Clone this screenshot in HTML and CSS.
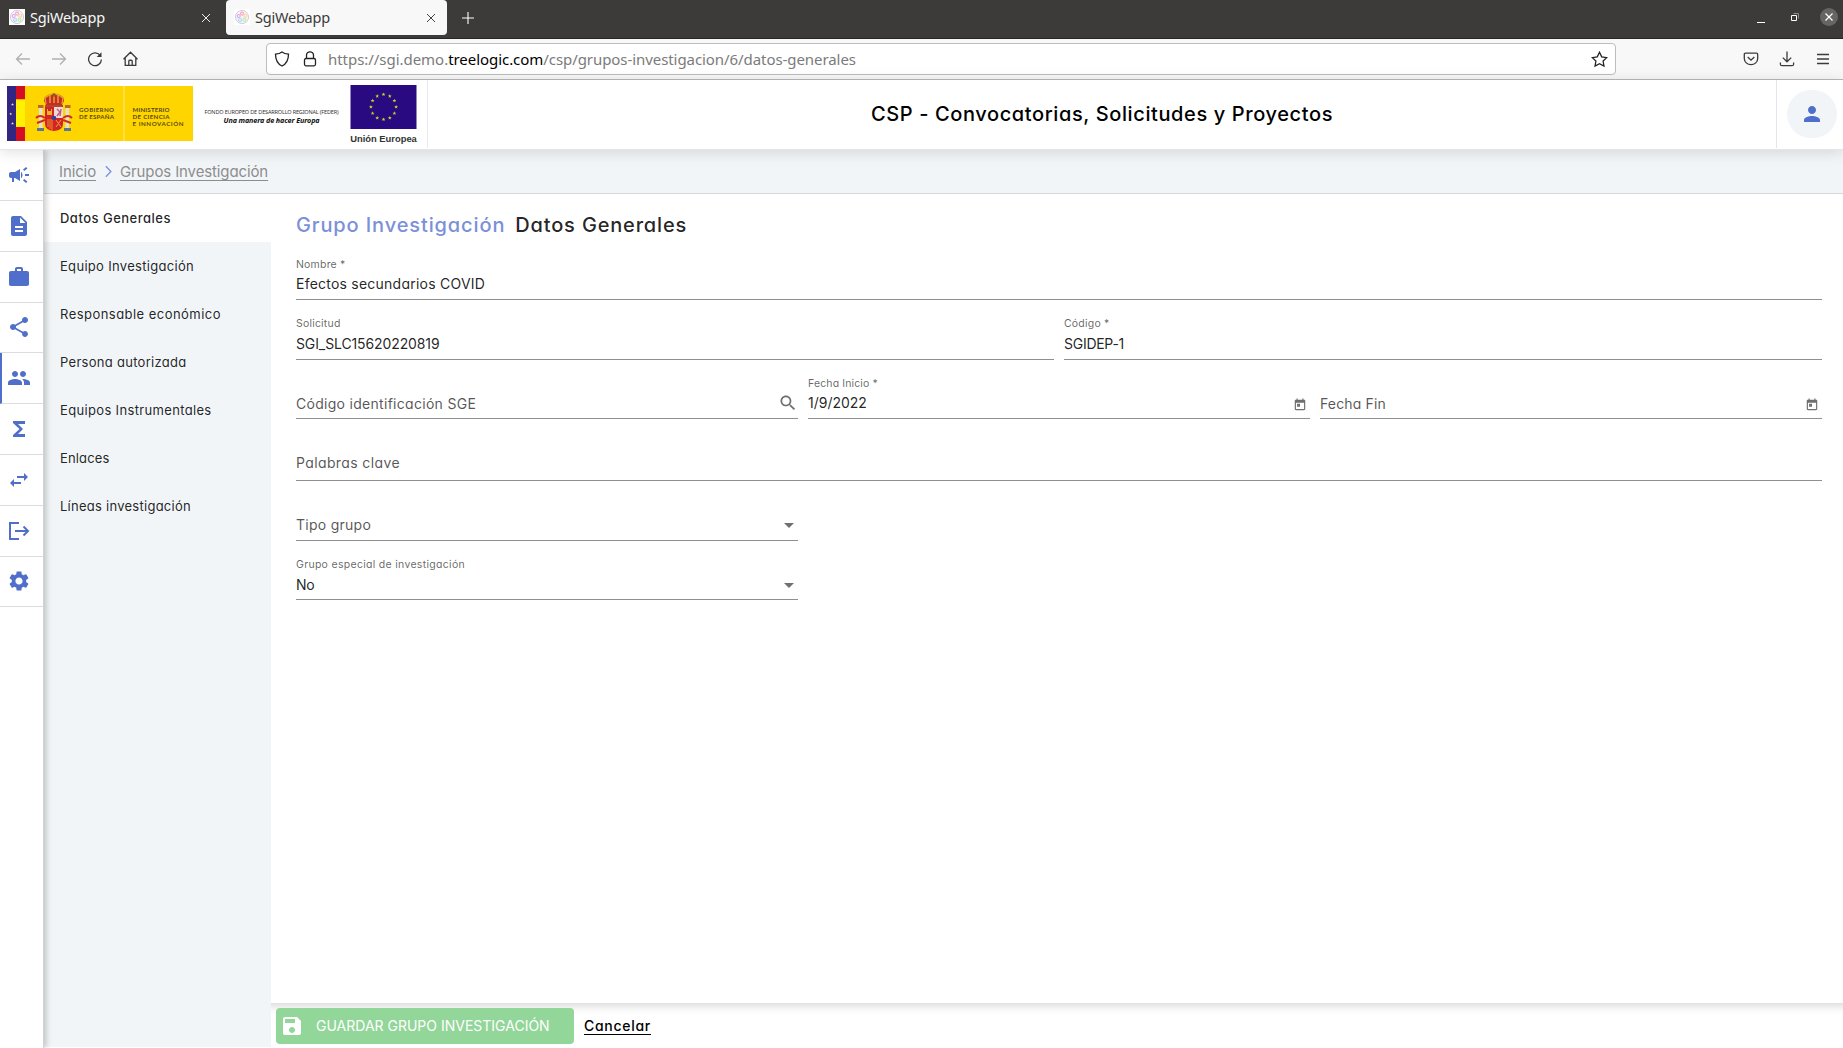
FILE: index.html
```
<!DOCTYPE html>
<html lang="es">
<head>
<meta charset="utf-8">
<title>SgiWebapp</title>
<link rel="stylesheet" href="styles.css">
</head>
<body>
<svg class="defs" width="0" height="0">
  <defs>
    <g id="favicon">
      <rect width="16" height="16" fill="#fff"/>
      <circle cx="8" cy="8" r="6.6" fill="#f8f3f8" stroke="#c8c4ce" stroke-width=".8"/>
      <g fill="none" stroke-width="1.1">
        <circle cx="8" cy="4.6" r="1.5" stroke="#f7a8c4"/><circle cx="11.2" cy="6.8" r="1.5" stroke="#f9d79a"/>
        <circle cx="10.4" cy="10.8" r="1.5" stroke="#b4eeb0"/><circle cx="6" cy="11" r="1.5" stroke="#a9d8f8"/>
        <circle cx="4.7" cy="7" r="1.5" stroke="#d8a8f2"/>
      </g>
    </g>
    <g id="today"><path d="M19 3h-1V1h-2v2H8V1H6v2H5c-1.11 0-1.99.9-1.99 2L3 19c0 1.1.89 2 2 2h14c1.1 0 2-.9 2-2V5c0-1.1-.9-2-2-2zm0 16H5V8h14v11zM7 10h5v5H7z"/></g>
    <path id="star" d="M0-1.5.4-.5 1.4-.5.6.2.9 1.2 0 .6-.9 1.2-.6.2-1.4-.5-.4-.5z"/>
  </defs>
</svg>

<div class="tabbar">
  <div class="tab">
    <svg class="fav" viewBox="0 0 16 16"><use href="#favicon"/></svg>
    <span class="tab-name">SgiWebapp</span>
    <svg class="tab-close" viewBox="0 0 10 10"><path d="M1 1l8 8M9 1L1 9"/></svg>
  </div>
  <div class="tab tab-active">
    <svg class="fav" viewBox="0 0 16 16"><use href="#favicon"/></svg>
    <span class="tab-name">SgiWebapp</span>
    <svg class="tab-close" viewBox="0 0 10 10"><path d="M1 1l8 8M9 1L1 9"/></svg>
  </div>
  <svg class="tab-new" viewBox="0 0 12 12"><path d="M6 0v12M0 6h12"/></svg>
  <div class="win">
    <svg class="win-min" width="10" height="10"><path d="M1 7.5h8" stroke="#fff"/></svg>
    <svg width="10" height="10"><path d="M3.500 1.500h5v5" stroke="#8d8c8a" fill="none"/><path d="M1.500 3.500h5v5h-5z" stroke="#fff" fill="none"/></svg>
    <span class="win-close"><svg width="10" height="10"><path d="M1.500 1.500l7 7M8.500 1.500l-7 7" stroke="#fff" stroke-width="1.300"/></svg></span>
  </div>
</div>

<div class="toolbar">
  <svg class="tb off" viewBox="0 0 16 16"><path d="M15 8H1.500M7 2.500L1.500 8 7 13.500"/></svg>
  <svg class="tb off" viewBox="0 0 16 16"><path d="M1 8h13.500M9 2.500L14.500 8 9 13.500"/></svg>
  <svg class="tb" viewBox="0 0 16 16"><path d="M13.500 5A6.400 6.400 0 1 0 14.400 8.500"/><path d="M14.500 1.200v4.800H9.700z" fill="#3b3b3d" stroke="none"/></svg>
  <svg class="tb" viewBox="0 0 16 16"><path d="M.5 8.200L7.500 1.200l7 7M2.200 7v7.300h10.600V7M5.800 14.300V10c0-1 3.400-1 3.400 0v4.300"/></svg>
  <div class="url">
    <svg class="url-icon" viewBox="0 0 16 16"><path d="M8 1C6 2.600 4 3 1.500 3.200 1.500 9 3 12.500 8 15c5-2.500 6.500-6 6.500-11.800C12 3 10 2.600 8 1z"/></svg>
    <svg class="url-icon" viewBox="0 0 16 16"><rect x="2.500" y="7.500" width="11" height="7.300" rx="1.500"/><path d="M4.500 7.500V4.300a3.500 3.500 0 0 1 7 0v3.200"/></svg>
    <div class="address"><span class="addr-a">https://sgi.demo.</span><span class="addr-b">treelogic.com</span><span class="addr-c">/csp/grupos-investigacion/6/datos-generales</span></div>
    <svg class="url-star" viewBox="0 0 16 16"><path d="M8 1.200l2.100 4.300 4.700.7-3.400 3.300.8 4.700L8 12l-4.200 2.200.8-4.700L1.200 6.200l4.700-.7z"/></svg>
  </div>
  <div class="tools">
    <svg class="tb" viewBox="0 0 16 16"><path d="M2.500 2.200h11q1.200 0 1.200 1.200v4A6.700 6.300 0 0 1 1.300 7.400v-4q0-1.200 1.200-1.200zM4.700 6L8 9.200 11.300 6"/></svg>
    <svg class="tb" viewBox="0 0 16 16"><path d="M8 .5v10.300M3.800 6.600L8 10.800l4.200-4.200M1.400 11.500v1.700q0 1.500 1.500 1.500h10.200q1.500 0 1.500-1.500v-1.700"/></svg>
    <svg class="tb" viewBox="0 0 16 16"><path d="M2 3.500h12M2 8h12M2 12.500h12"/></svg>
  </div>
</div>

<header class="header">
  <div class="logos">
    <svg class="flags" viewBox="0 0 186 55">
      <rect width="187" height="55" fill="#ffd500"/>
      <path d="M0 0h9v55H0z" fill="#312783"/>
      <path d="M9 0h9v13.500H9zM9 41h9v14H9z" fill="#d50f20"/>
      <path d="M9 13.500h9V41H9z" fill="#fff100"/>
      <g fill="#fff36b"><use href="#star" x="5.500" y="18.500"/><use href="#star" x="3.700" y="28"/><use href="#star" x="5.500" y="37.500"/></g>
      <path d="M117 0v55" stroke="#ffe98a"/>
      <g>
        <path d="M37 15c0-5 4-7 10-7s10 2 10 7l-2 4H39z" fill="#c62d26"/>
        <path d="M39 18l-1-6q4-4 9-4t9 4l-1 6" fill="none" stroke="#e0a526" stroke-width="1.300"/>
        <path d="M47 8v9M43 9v8M51 9v8" stroke="#f0bb2a" stroke-width="1.200"/>
        <circle cx="47" cy="9" r="1.700" fill="#8f5b20"/>
        <path d="M38 19h18v2H38z" fill="#b5452a"/>
        <path d="M38 21h18v17q0 6-9 7-9-1-9-7z" fill="#d4222a"/>
        <path d="M47 21h9v11h-9z" fill="#efd9d7"/>
        <path d="M50 23l3 3-3 4M54 23l-1 7" stroke="#bc5a79" fill="none" stroke-width="1.400"/>
        <path d="M40 29v-6h1v2h3v-2h1v6z" fill="#efb32a"/>
        <path d="M41 33v8M43 33v10M45 33v11" stroke="#f1aa26" stroke-width=".8"/>
        <path d="M49 34l5 7M54 34l-5 7" stroke="#e9a426"/>
        <circle cx="47" cy="32" r="2.300" fill="#3e3e91"/>
        <path d="M32 22h3.500v20H32zM58.500 22H62v20h-3.500z" fill="#e3e0d0"/>
        <path d="M31 19h5.500v3H31zM58 19h5.500v3H58z" fill="#bb6a26"/>
        <path d="M29 32q4-4 9 0M30 37l8-3M65 32q-4-4-9 0M64 37l-8-3" stroke="#cf2c27" fill="none" stroke-width="2"/>
        <path d="M30 42h7v3h-7zM57 42h7v3h-7z" fill="#5c7791"/>
      </g>
      <g class="gov">
        <text x="72" y="25.500" textLength="35">GOBIERNO</text><text x="72" y="32.500" textLength="35">DE ESPAÑA</text>
        <text x="125.500" y="25.500" textLength="37">MINISTERIO</text><text x="125.500" y="32.500" textLength="37">DE CIENCIA</text><text x="125.500" y="39.500" textLength="51">E INNOVACIÓN</text>
      </g>
    </svg>
    <div class="feder"><span>FONDO EUROPEO DE DESARROLLO REGIONAL (FEDER)</span><b>Una manera de hacer Europa</b></div>
    <div class="eu">
      <svg viewBox="0 0 66 44">
        <rect width="66" height="44" fill="#2a0a80"/>
        <g fill="#bfe022" transform="translate(33 22)">
          <use href="#star" transform="translate(0 -12.500)scale(1.350)"/><use href="#star" transform="translate(6.300 -10.900)scale(1.350)"/><use href="#star" transform="translate(10.900 -6.300)scale(1.350)"/><use href="#star" transform="translate(12.600 0)scale(1.350)"/><use href="#star" transform="translate(10.900 6.300)scale(1.350)"/><use href="#star" transform="translate(6.300 10.900)scale(1.350)"/><use href="#star" transform="translate(0 12.500)scale(1.350)"/><use href="#star" transform="translate(-6.300 10.900)scale(1.350)"/><use href="#star" transform="translate(-10.900 6.300)scale(1.350)"/><use href="#star" transform="translate(-12.600 0)scale(1.350)"/><use href="#star" transform="translate(-10.900 -6.300)scale(1.350)"/><use href="#star" transform="translate(-6.300 -10.900)scale(1.350)"/>
        </g>
      </svg>
      <span>Unión Europea</span>
    </div>
  </div>
  <h1 class="title">CSP - Convocatorias, Solicitudes y Proyectos</h1>
  <div class="user"><span class="avatar"><svg viewBox="0 0 24 24"><path d="M12 12c2.210 0 4-1.790 4-4s-1.790-4-4-4-4 1.790-4 4 1.790 4 4 4zm0 2c-2.670 0-8 1.340-8 4v2h16v-2c0-2.660-5.330-4-8-4z"/></svg></span></div>
</header>

<div class="app">
  <nav class="rail">
    <a><svg viewBox="0 0 24 24"><path d="M18 11v2h4v-2h-4zm-2 6.610c.96.71 2.210 1.650 3.200 2.390.4-.53.8-1.070 1.200-1.600-.99-.74-2.240-1.680-3.200-2.400-.4.540-.8 1.080-1.200 1.610zM20.400 5.600c-.4-.53-.8-1.070-1.200-1.600-.99.74-2.240 1.680-3.200 2.400.4.530.8 1.070 1.200 1.600.96-.72 2.210-1.650 3.200-2.400zM4 9c-1.100 0-2 .9-2 2v2c0 1.100.9 2 2 2h1v4h2v-4h1l5 3V6L8 9H4zm11.500 3c0-1.330-.58-2.530-1.500-3.350v6.690c.92-.81 1.500-2.010 1.500-3.340z"/></svg></a>
    <a><svg viewBox="0 0 24 24"><path d="M14 2H6c-1.100 0-1.990.9-1.990 2L4 20c0 1.100.89 2 1.990 2H18c1.100 0 2-.9 2-2V8l-6-6zm2 16H8v-2h8v2zm0-4H8v-2h8v2zm-3-5V3.500L18.500 9H13z"/></svg></a>
    <a><svg viewBox="0 0 24 24"><path d="M20 6h-4V4c0-1.110-.89-2-2-2h-4c-1.110 0-2 .89-2 2v2H4c-1.110 0-1.990.89-1.990 2L2 19c0 1.110.89 2 2 2h16c1.110 0 2-.89 2-2V8c0-1.110-.89-2-2-2zm-6 0h-4V4h4v2z"/></svg></a>
    <a><svg viewBox="0 0 24 24"><path d="M18 16.080c-.76 0-1.440.3-1.960.77L8.910 12.700c.05-.23.09-.46.09-.7s-.04-.47-.09-.7l7.050-4.110c.54.5 1.250.81 2.040.81 1.660 0 3-1.340 3-3s-1.340-3-3-3-3 1.340-3 3c0 .24.040.47.090.7L8.040 9.810C7.500 9.310 6.790 9 6 9c-1.660 0-3 1.340-3 3s1.340 3 3 3c.79 0 1.500-.31 2.040-.81l7.120 4.160c-.05.21-.08.43-.08.65 0 1.610 1.310 2.920 2.920 2.920s2.920-1.310 2.920-2.920-1.310-2.920-2.920-2.920z"/></svg></a>
    <a class="current"><svg viewBox="0 0 24 24"><path d="M16 11c1.660 0 2.990-1.340 2.990-3S17.660 5 16 5s-3 1.340-3 3 1.340 3 3 3zm-8 0c1.660 0 2.990-1.340 2.990-3S9.660 5 8 5 5 6.340 5 8s1.340 3 3 3zm0 2c-2.330 0-7 1.170-7 3.500V19h14v-2.500c0-2.330-4.670-3.500-7-3.500zm8 0c-.29 0-.62.020-.97.050 1.160.84 1.970 1.970 1.970 3.450V19h6v-2.500c0-2.330-4.670-3.500-7-3.500z"/></svg></a>
    <a><svg viewBox="0 0 24 24"><path d="M18 4H6v2l6.500 6L6 18v2h12v-3h-7l5-5-5-5h7z"/></svg></a>
    <a><svg viewBox="0 0 24 24"><path d="M6.990 11L3 15l3.990 4v-3H14v-2H6.990v-3zM21 9l-3.990-4v3H10v2h7.010v3L21 9z"/></svg></a>
    <a><svg viewBox="0 0 24 24"><path d="M12 4H3v16h9M8 12h12.500M16.500 7.500L21 12l-4.500 4.500" fill="none" stroke="#506fca" stroke-width="2"/></svg></a>
    <a><svg viewBox="0 0 24 24"><path d="M19.140 12.940c.04-.3.060-.61.060-.94 0-.32-.02-.64-.07-.94l2.030-1.580c.18-.14.230-.41.120-.61l-1.920-3.320c-.12-.22-.37-.29-.59-.22l-2.390.96c-.5-.38-1.030-.7-1.620-.94l-.36-2.540c-.04-.24-.24-.41-.48-.41h-3.840c-.24 0-.43.17-.47.41l-.36 2.540c-.59.24-1.130.57-1.620.94l-2.390-.96c-.22-.08-.47 0-.59.22L2.740 8.870c-.12.210-.08.470.12.610l2.030 1.580c-.05.3-.09.630-.09.940s.020.640.070.940l-2.030 1.580c-.18.140-.23.410-.12.610l1.920 3.320c.12.220.37.290.59.220l2.390-.96c.5.380 1.030.7 1.620.94l.36 2.540c.05.240.24.410.48.410h3.840c.24 0 .44-.17.470-.41l.36-2.540c.59-.24 1.130-.56 1.620-.94l2.390.96c.22.080.47 0 .59-.22l1.920-3.320c.12-.22.070-.47-.12-.61l-2.010-1.580zM12 15.600c-1.980 0-3.600-1.620-3.600-3.600s1.620-3.600 3.600-3.600 3.600 1.620 3.600 3.600-1.620 3.600-3.600 3.600z"/></svg></a>
  </nav>

  <div class="page">
    <div class="crumbs"><a>Inicio</a><svg viewBox="0 0 8 14"><path d="M1 1L6.700 7 1 13"/></svg><a>Grupos Investigación</a></div>
    <div class="body">
      <aside class="menu">
        <a class="on m-gen">Datos Generales</a>
        <a class="m-eq">Equipo Investigación</a>
        <a class="m-resp">Responsable económico</a>
        <a class="m-per">Persona autorizada</a>
        <a class="m-ins">Equipos Instrumentales</a>
        <a class="m-enl">Enlaces</a>
        <a class="m-lin">Líneas investigación</a>
      </aside>
      <main class="main">
        <div class="form">
          <h2 class="heading"><span>Grupo Investigación</span>Datos Generales</h2>
          <div class="row r1 one">
            <div class="field"><label>Nombre *</label><div class="value v-name">Efectos secundarios COVID</div></div>
          </div>
          <div class="row r2 two">
            <div class="field"><label>Solicitud</label><div class="value v-code">SGI_SLC15620220819</div></div>
            <div class="field"><label>Código *</label><div class="value v-dep">SGIDEP-1</div></div>
          </div>
          <div class="row r3 three">
            <div class="field"><div class="value empty v-sge">Código identificación SGE</div>
              <svg class="search" viewBox="0 0 24 24"><path d="M15.500 14h-.79l-.28-.27C15.410 12.590 16 11.110 16 9.500 16 5.910 13.090 3 9.500 3S3 5.910 3 9.500 5.910 16 9.500 16c1.610 0 3.090-.59 4.230-1.570l.27.280v.79l5 4.990L20.490 19l-4.990-5zm-6 0C7.010 14 5 11.990 5 9.500S7.010 5 9.500 5 14 7.010 14 9.500 11.990 14 9.500 14z"/></svg></div>
            <div class="field"><label class="l-ini">Fecha Inicio *</label><div class="value">1/9/2022</div>
              <svg class="date" viewBox="0 0 24 24"><use href="#today"/></svg></div>
            <div class="field"><div class="value empty v-fin">Fecha Fin</div>
              <svg class="date" viewBox="0 0 24 24"><use href="#today"/></svg></div>
          </div>
          <div class="row r4 one">
            <div class="field"><div class="value empty v-pal">Palabras clave</div></div>
          </div>
          <div class="row r5 three">
            <div class="field"><div class="value empty v-tipo">Tipo grupo</div><i class="caret"></i></div>
          </div>
          <div class="row r6 three">
            <div class="field"><label class="l-esp">Grupo especial de investigación</label><div class="value v-no">No</div><i class="caret"></i></div>
          </div>
        </div>
        <footer class="footer">
          <button class="save"><svg viewBox="0 0 24 24"><path d="M17 3H5c-1.110 0-2 .9-2 2v14c0 1.100.89 2 2 2h14c1.100 0 2-.9 2-2V7l-4-4zm-5 16c-1.660 0-3-1.340-3-3s1.340-3 3-3 3 1.340 3 3-1.340 3-3 3zm3-10H5V5h10v4z"/></svg>GUARDAR GRUPO INVESTIGACIÓN</button>
          <a class="cancel">Cancelar</a>
        </footer>
      </main>
    </div>
  </div>
</div>
</body>
</html>
```
FILE: styles.css
```
* { box-sizing: border-box; }
body {
  margin: 0;
  width: 1843px;
  height: 1048px;
  overflow: hidden;
  display: flex;
  flex-direction: column;
  background: #fff;
  color: rgba(0, 0, 0, .87);
  font-family: Inter, sans-serif;
  font-feature-settings: "cv11";
}
.defs { display: none; }
svg { display: block; flex: none; }

/* browser tabs */
.tabbar {
  height: 39px;
  flex: none;
  display: flex;
  align-items: flex-start;
  background: #3d3b39;
  border-bottom: 1px solid #282625;
  color: #f7f7f7;
  font: 14.5px "Noto Sans", sans-serif;
  letter-spacing: -.22px;
}
.tab { width: 226px; height: 35px; display: flex; align-items: center; padding: 0 19px 0 9px; }
.tab-active { width: 221px; padding: 0 12px 0 8px; background: #f8f8f8; color: #3b3b3b; border-radius: 4px; }
.tab-active .tab-close { stroke: #444; }
.fav { width: 16px; height: 16px; margin-right: 5px; margin-top: -1px; }
.tab-name { flex: 1; margin-top: -2px; }
.tab-close { width: 10px; height: 10px; stroke: #eee; fill: none; }
.tab .tab-close { margin-right: -4px; }
.tab-active .tab-close { margin-right: -1px; }
.tab-new { width: 12px; height: 12px; margin: 12px 0 0 15px; stroke: #fff; stroke-width: 1.1; fill: none; }
.win { margin-left: auto; display: flex; align-items: center; height: 34px; padding-right: 5px; gap: 24px; }
.win-min { margin-top: 5px; }
.win-close {
  width: 18px; height: 18px; border-radius: 50%; background: #666563;
  display: grid; place-items: center; margin-left: -4px;
}

/* browser toolbar */
.toolbar {
  height: 41px;
  flex: none;
  display: flex;
  align-items: center;
  background: #f8f8f8;
  border-bottom: 1px solid #b9b9b9;
  padding: 0 12px 0 15px;
}
.tb { width: 16px; height: 16px; margin-right: 20px; fill: none; stroke: #3b3b3d; stroke-width: 1.3; }
.off { stroke: #b0b0b0; }
.url {
  width: 1350px; height: 32px; margin-left: 107px;
  display: flex; align-items: center; padding: 0 7px;
  background: #fff; border: 1px solid #bdbdbd; border-radius: 4px;
}
.url-icon { width: 16px; height: 16px; margin-right: 12px; fill: none; stroke: #222; stroke-width: 1.3; }
.url-star { width: 17px; height: 17px; margin-left: auto; fill: none; stroke: #222; stroke-width: 1.2; }
.address { display: flex; font: 15px "Noto Sans", sans-serif; color: #7b7b7b; margin-left: -2px; margin-top: -1px; }
.addr-a { letter-spacing: -.04px; }
.addr-b { color: #000; letter-spacing: -.05px; }
.addr-c { letter-spacing: -.07px; }
.tools { margin-left: auto; display: flex; gap: 20px; }
.tools .tb { margin-right: 0; }

/* application header */
.header {
  height: 70px;
  flex: none;
  display: flex;
  position: relative;
  z-index: 3;
  background: #fff;
  border-bottom: 1px solid #e6e6ea;
  box-shadow: 0 2px 14px rgba(0, 0, 0, .13);
}
.logos { width: 428px; height: 68px; display: flex; padding: 6px 0 0 7px; border-right: 1px solid #ebebee; }
.flags { width: 186px; height: 55px; }
.gov { font: 700 6.2px Lato, sans-serif; fill: #5a4b12; }
.feder {
  width: 157px; height: 55px; padding-top: 5px;
  display: flex; flex-direction: column; align-items: center; justify-content: center;
  font: 5.5px/8px "Noto Sans", sans-serif; letter-spacing: -.16px; color: #333; white-space: nowrap;
}
.feder b { font: italic 700 7.2px/8px "Noto Sans", sans-serif; letter-spacing: -.1px; color: #111; }
.eu { width: 67px; margin-top: -1px; }
.eu svg { width: 67px; height: 44px; }
.eu span {
  display: block; text-align: center; color: #333; white-space: nowrap;
  font: 700 9.4px/14px "Liberation Sans", sans-serif; margin: 3px -2px 0;
}
.title {
  flex: 1; margin: 0; text-align: center; color: #000;
  font-size: 20px; font-weight: 500; line-height: 68px; letter-spacing: .61px;
}
.user { width: 67px; height: 68px; border-left: 1px solid #e4e4ea; padding: 10px 0 0 10px; }
.avatar { width: 50px; height: 48px; border-radius: 25px; background: #f1f5f8; display: grid; place-items: center; }
.avatar svg { width: 24px; height: 24px; fill: #506fca; margin-top: -1px; }

/* layout */
.app { flex: 1; display: flex; min-height: 0; }
.rail {
  width: 44px; flex: none; position: relative; z-index: 2; background: #fff;
  border-right: 1px solid #d3d3d6;
  box-shadow: 2px 0 6px rgba(0, 0, 0, .22);
}
.rail a { display: flex; height: 50.8px; align-items: center; padding: 0 0 0 7px; border-bottom: 1px solid #dcdcdf; }
.rail a:first-child { height: 51px; }
.rail svg { width: 24px; height: 24px; fill: #506fca; }
.rail .current { border-left: 2px solid #506fca; padding-left: 5px; }
.page { flex: 1; display: flex; flex-direction: column; min-width: 0; }
.crumbs {
  height: 44px; flex: none; display: flex; align-items: center; gap: 9px; padding: 0 0 0 15px;
  background: #f1f5f8; border-bottom: 1px solid #d5d9dc;
  font-size: 15px; letter-spacing: -.12px; color: #8d8d8d;
}
.crumbs a { text-decoration: underline; text-underline-offset: 3px; text-decoration-thickness: 1px; }
.crumbs svg { width: 7px; height: 13px; margin-right: -1px; fill: none; stroke: #7e93da; stroke-width: 1.6; }
.body { flex: 1; display: flex; min-height: 0; }
.menu { width: 227px; flex: none; background: #f1f5f8; margin-bottom: 1px; font-size: 13px; }
.menu a { display: block; height: 48px; line-height: 48px; padding-left: 16px; }
.menu .on { background: #fff; font-weight: 500; }
.m-gen { letter-spacing: .49px; }
.m-eq { letter-spacing: .31px; }
.m-resp { letter-spacing: .46px; }
.m-per { letter-spacing: .29px; }
.m-ins { letter-spacing: .34px; }
.m-enl { letter-spacing: .15px; }
.m-lin { letter-spacing: .26px; }

/* form */
.main { flex: 1; display: flex; flex-direction: column; min-width: 0; }
.form { flex: 1; padding: 0 21px 0 25px; }
.heading { margin: 0; height: 46px; padding-top: 17px; font-size: 20px; line-height: 28px; font-weight: 500; letter-spacing: .83px; white-space: nowrap; }
.heading span { color: #7b90d9; letter-spacing: .88px; margin-right: 10px; }
.row { display: grid; column-gap: 10px; }
.one { grid-template-columns: 1fr; }
.two { grid-template-columns: 1fr 1fr; }
.three { grid-template-columns: 1fr 1fr 1fr; }
.r1, .r2, .r5 { height: 60px; }
.r3, .r6 { height: 59px; }
.r4 { height: 62px; }
.field {
  position: relative; display: flex; flex-direction: column; justify-content: flex-end;
  border-bottom: 1px solid #8f8f8f; padding-bottom: 5px;
}
label { font-size: 10.5px; line-height: 14px; margin-bottom: 3px; color: rgba(0, 0, 0, .62); letter-spacing: .2px; }
.r1 label, .r3 label { margin-bottom: 2px; }
.l-esp { letter-spacing: .3px; }
.r3 .l-ini { letter-spacing: .13px; }
.value { font-size: 14px; line-height: 20px; white-space: nowrap; }
.empty { color: rgba(0, 0, 0, .68); }
.r3 .empty { margin-bottom: -1px; }
.r4 .field { padding-bottom: 7px; }
.r6 .field { padding-bottom: 4px; }
.v-name { letter-spacing: .23px; }
.v-code { letter-spacing: -.11px; }
.v-dep { letter-spacing: -.27px; }
.v-sge { letter-spacing: .29px; }
.v-fin { letter-spacing: .16px; }
.v-pal { letter-spacing: .38px; }
.v-tipo { letter-spacing: .26px; }
.v-no { letter-spacing: -.4px; }
.search, .date, .caret { position: absolute; }
.search { width: 20px; height: 20px; right: 0; bottom: 5px; fill: #6f6f6f; }
.date { width: 14px; height: 14px; right: 3px; bottom: 6px; fill: #6f6f6f; }
.caret { right: 4px; bottom: 12px; border: 5px solid transparent; border-top-color: #707070; border-bottom: 0; }
.r6 .caret { bottom: 11px; }

.footer {
  height: 45px; flex: none; display: flex; align-items: center; padding: 0 0 0 5px;
  background: #fff; box-shadow: inset 0 14px 10px -11px rgba(0, 0, 0, .16);
}
.save {
  width: 298px; height: 36px; border: 0; border-radius: 4px; padding: 0 0 0 4px;
  display: flex; align-items: center; background: #92d699; color: #fff;
  font: 14px Inter, sans-serif; letter-spacing: 0; white-space: nowrap;
}
.save svg { width: 24px; height: 24px; fill: #fff; margin-right: 12px; }
.cancel {
  margin-left: 10px; color: #000; font-size: 14px; font-weight: 500; letter-spacing: .72px;
  text-decoration: underline; text-underline-offset: 3px; text-decoration-thickness: 1px;
}
```
